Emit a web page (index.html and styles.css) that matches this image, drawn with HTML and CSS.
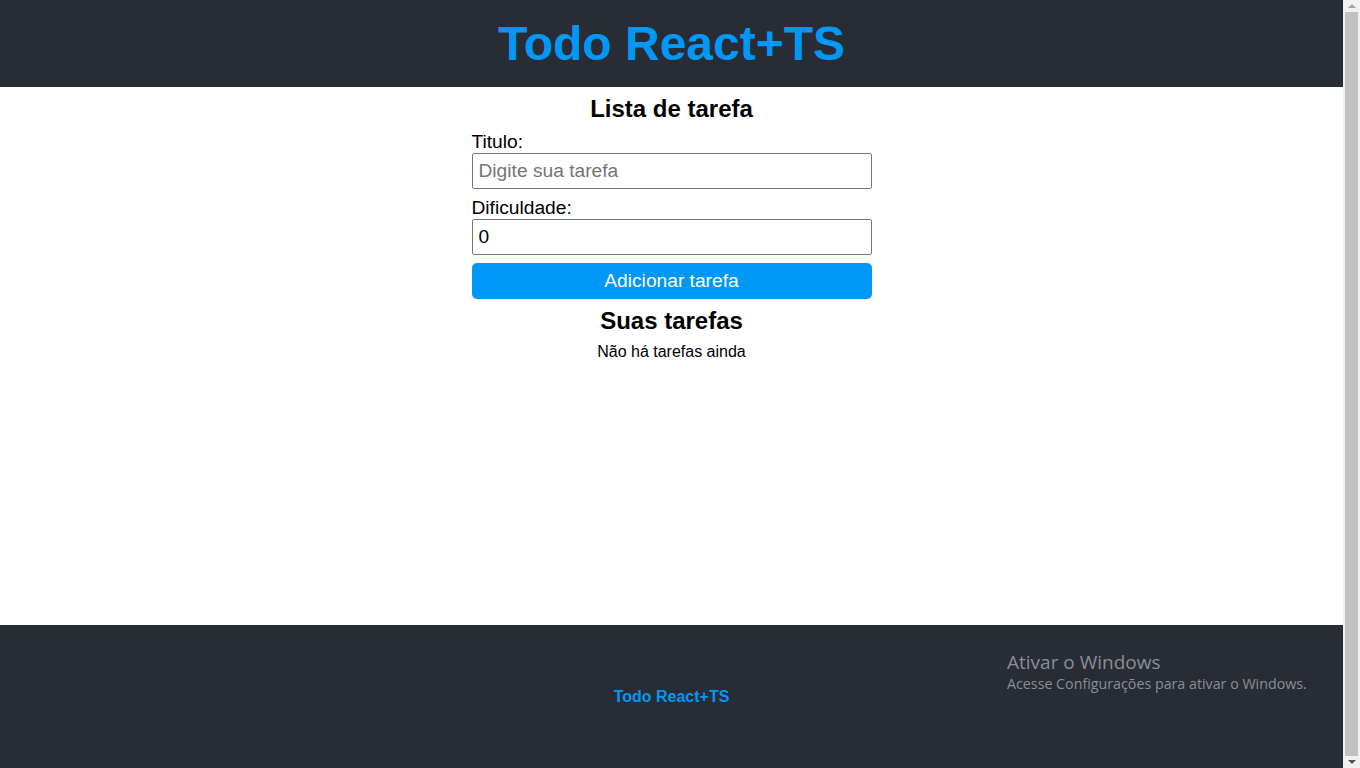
FILE: index.html
```html
<!DOCTYPE html>
<html lang="pt-BR">
<head>
<meta charset="utf-8">
<title>Todo React+TS</title>
<link rel="stylesheet" href="styles.css">
</head>
<body>
<div class="window">
  <div class="page">
    <header class="header">
      <h1 class="header-title">Todo React+TS</h1>
    </header>
    <main class="main">
      <h2 class="section-title">Lista de tarefa</h2>
      <form class="task-form">
        <div class="field">
          <label class="field-label" for="title">Titulo:</label>
          <input class="field-input" id="title" type="text" placeholder="Digite sua tarefa">
        </div>
        <div class="field">
          <label class="field-label" for="difficulty">Dificuldade:</label>
          <input class="field-input" id="difficulty" type="text" value="0">
        </div>
        <button class="submit-btn" type="button">Adicionar tarefa</button>
      </form>
      <h2 class="section-title tasks-title">Suas tarefas</h2>
      <p class="empty">Não há tarefas ainda</p>
    </main>
    <footer class="footer">
      <p class="footer-text">Todo React+TS</p>
    </footer>
  </div>
  <div class="scrollbar">
    <span class="arrow arrow-up"></span>
    <span class="thumb"></span>
    <span class="arrow arrow-down"></span>
  </div>
  <div class="watermark">
    <div class="wm-title">Ativar o Windows</div>
    <div class="wm-sub">Acesse Configurações para ativar o Windows.</div>
  </div>
</div>
</body>
</html>
```

FILE: styles.css
```css
* { box-sizing: border-box; }

html, body {
  margin: 0;
  padding: 0;
  height: 768px;
  overflow: hidden;
}

body {
  font-family: "Liberation Sans", Arial, sans-serif;
  color: #000;
  background: #fff;
}

.window {
  position: relative;
  display: flex;
  height: 768px;
}

.page {
  flex: 1;
  display: flex;
  flex-direction: column;
  min-width: 0;
}

.header {
  height: 87px;
  background: #282c34;
  display: flex;
  align-items: center;
  justify-content: center;
}

.header-title {
  margin: 0;
  font-size: 48px;
  line-height: 1.15;
  font-weight: bold;
  color: #0098f6;
}

.main {
  flex: 1;
  display: flex;
  flex-direction: column;
  align-items: center;
  padding-top: 8px;
}

.section-title {
  margin: 0;
  font-size: 24px;
  line-height: 28px;
  font-weight: bold;
}

.task-form {
  width: 400px;
  display: flex;
  flex-direction: column;
  margin-top: 8px;
}

.field {
  display: flex;
  flex-direction: column;
  margin-bottom: 8px;
}

.field-label {
  font-size: 19.2px;
  line-height: 21px;
  margin-bottom: 1px;
}

.field-input {
  height: 36px;
  width: 100%;
  border: 1px solid #767676;
  border-radius: 2px;
  padding: 0 6px;
  font-family: "Liberation Sans", Arial, sans-serif;
  font-size: 19.2px;
  color: #000;
  background: #fff;
}

.field-input::placeholder {
  color: #757575;
}

.submit-btn {
  height: 36px;
  width: 100%;
  border: none;
  border-radius: 5px;
  background: #0098f6;
  color: #fff;
  font-family: "Liberation Sans", Arial, sans-serif;
  font-size: 19.2px;
  cursor: pointer;
}

.tasks-title {
  margin-top: 8px;
}

.empty {
  margin: 8px 0 0;
  font-size: 16px;
  line-height: 18px;
}

.footer {
  height: 143px;
  background: #282c34;
  display: flex;
  justify-content: center;
  padding-top: 63px;
}

.footer-text {
  margin: 0;
  font-size: 16px;
  line-height: 18px;
  font-weight: bold;
  color: #0098f6;
}

.scrollbar {
  width: 17px;
  background: #f1f1f1;
  display: flex;
  flex-direction: column;
  align-items: center;
}

.arrow {
  width: 0;
  height: 0;
  border-left: 4px solid transparent;
  border-right: 4px solid transparent;
}

.arrow-up {
  margin-top: 4px;
  border-bottom: 4px solid #a3a3a3;
}

.arrow-down {
  margin-bottom: 4px;
  border-top: 4px solid #505050;
}

.thumb {
  flex: 1;
  width: 13px;
  margin: 4px 0;
  background: #c1c1c1;
}

.watermark {
  position: absolute;
  left: 1007px;
  top: 649px;
  font-family: "Open Sans", "Noto Sans", sans-serif;
  color: #8b8e94;
  pointer-events: none;
}

.wm-title {
  font-size: 19px;
  line-height: 26px;
}

.wm-sub {
  font-size: 14.25px;
  line-height: 18px;
}
```
